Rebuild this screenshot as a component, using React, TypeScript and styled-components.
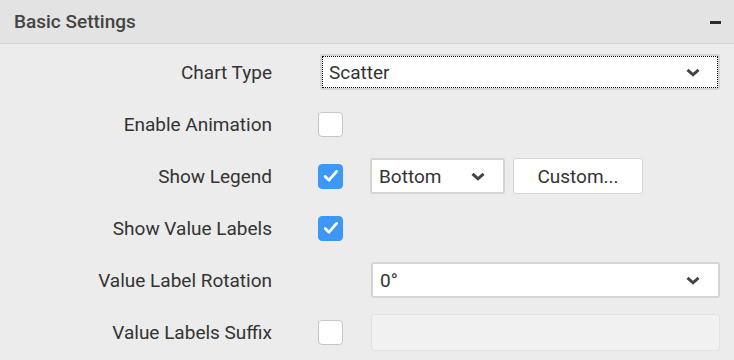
import React from "react";
import styled, { createGlobalStyle } from "styled-components";

// Basic Settings panel
// Property grid with labels on the left and controls on the right
const GlobalStyle = createGlobalStyle`
  html, body {
    margin: 0;
    padding: 0;
    background: #ececec;
    font-family: Roboto, "Liberation Sans", sans-serif;
  }
`;

const Chevron = (): JSX.Element => (
  <svg width="14" height="9" viewBox="0 0 14 9">
    <path d="M1.5 1.8 L7 6.8 L12.5 1.8" fill="none" stroke="#444" strokeWidth="3" />
  </svg>
);

const Check = (): JSX.Element => (
  <svg width="16" height="14" viewBox="0 0 16 14">
    <path d="M2.2 7.4 L6 11.2 L13.6 2.4" fill="none" stroke="#fff" strokeWidth="2.8" strokeLinecap="round" strokeLinejoin="round" />
  </svg>
);

const App = (): JSX.Element => {
  return (
    <Panel>
      <GlobalStyle />
      <Header>
        <Title>Basic Settings</Title>
        <Collapse />
      </Header>
      <Body>
        <Row>
          <Label>Chart Type</Label>
          <Controls>
            <Select focused grow>
              <span>Scatter</span>
              <Chevron />
            </Select>
          </Controls>
        </Row>
        <Row>
          <Label>Enable Animation</Label>
          <Controls>
            <CheckBox />
          </Controls>
        </Row>
        <Row>
          <Label>Show Legend</Label>
          <Controls>
            <CheckBox checked>
              <Check />
            </CheckBox>
            <Select width="135px">
              <span>Bottom</span>
              <Chevron />
            </Select>
            <Button>Custom...</Button>
          </Controls>
        </Row>
        <Row>
          <Label>Show Value Labels</Label>
          <Controls>
            <CheckBox checked>
              <Check />
            </CheckBox>
          </Controls>
        </Row>
        <Row>
          <Label>Value Label Rotation</Label>
          <Controls>
            <CheckSlot />
            <Select grow>
              <span>0°</span>
              <Chevron />
            </Select>
          </Controls>
        </Row>
        <Row>
          <Label>Value Labels Suffix</Label>
          <Controls>
            <CheckBox />
            <TextBox disabled />
          </Controls>
        </Row>
      </Body>
    </Panel>
  );
};

// Styled components
const Panel = styled.div`
  width: 734px;
  height: 360px;
  overflow: hidden;
`;
const Header = styled.div`
  height: 43px;
  display: flex;
  align-items: center;
  justify-content: space-between;
  padding: 0 13px 0 14px;
  background: #e3e3e3;
  border-bottom: 1px solid #d2d2d2;
`;
const Title = styled.div`
  font-size: 19px;
  font-weight: 500;
  color: #444;
`;
const Collapse = styled.div`
  width: 11px;
  height: 3px;
  background: #2b2b2b;
  margin-top: 2px;
`;
const Body = styled.div`
  padding-top: 2px;
`;
const Row = styled.div`
  height: 52px;
  display: flex;
  align-items: center;
`;
const Label = styled.div`
  width: 272px;
  margin-right: 46px;
  text-align: right;
  font-size: 19px;
  color: #333;
  white-space: nowrap;
`;
const Controls = styled.div`
  width: 402px;
  display: flex;
  align-items: center;
`;
const CheckBox = styled.div<{ checked?: boolean }>`
  width: 25px;
  height: 25px;
  box-sizing: border-box;
  border-radius: 4px;
  display: flex;
  align-items: center;
  justify-content: center;
  background: ${(p) => (p.checked ? "#3c97f7" : "#fff")};
  border: 1px solid ${(p) => (p.checked ? "#3c97f7" : "#c6c6c6")};
  margin-right: 27px;
  flex-shrink: 0;
`;
const CheckSlot = styled.div`
  width: 25px;
  margin-right: 28px;
  flex-shrink: 0;
`;
const Select = styled.div<{ focused?: boolean; grow?: boolean; width?: string }>`
  box-sizing: border-box;
  height: 36px;
  ${(p) => (p.grow ? "flex: 1;" : `width: ${p.width};`)}
  ${(p) => (p.focused ? "margin-left: 2px; outline: 1px dotted #000; outline-offset: -3px;" : "")}
  background: #fff;
  border: 2px solid #d4d4d4;
  border-radius: 3px;
  display: flex;
  align-items: center;
  justify-content: space-between;
  padding: 0 18px 0 7px;
  font-size: 19px;
  color: #333;
`;
const Button = styled.div`
  box-sizing: border-box;
  height: 36px;
  width: 130px;
  margin-left: 8px;
  background: #fff;
  border: 1px solid #d6d6d6;
  border-radius: 3px;
  display: flex;
  align-items: center;
  justify-content: center;
  font-size: 19px;
  color: #333;
`;
const TextBox = styled.input`
  box-sizing: border-box;
  flex: 1;
  height: 37px;
  margin-left: 1px;
  background: #f1f1f1;
  border: 1px solid #e2e2e2;
  border-radius: 3px;
`;

export default App;
